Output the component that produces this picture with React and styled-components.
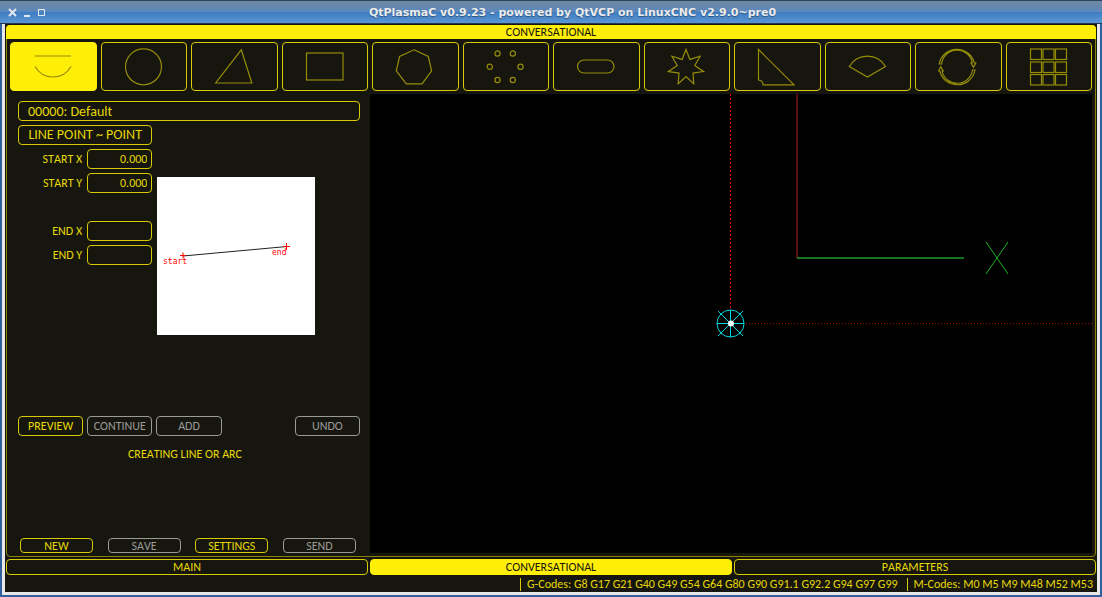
import React from "react";
import styled, { createGlobalStyle, css } from "styled-components";

const YELLOW = "#ffee06";
const TEXT = "#e6d806";
const DIM = "#d8cb06";
const OLIVE = "#8b8208";
const DARK = "#16160e";
const GREY = "#9a9a98";

const GlobalStyle = createGlobalStyle`
  * { box-sizing: border-box; }
  body { margin: 0; font-family: Carlito, Lato, "Liberation Sans", sans-serif; font-size: 12px; font-kerning: none; }
  button, input, select { font: inherit; font-kerning: none; color: inherit; margin: 0; }
`;

const Window = styled.div`
  min-height: 100vh;
  display: flex;
  flex-direction: column;
  background: #e8e8e8;
  border: 2px solid #31619d;
  border-top: 0;
`;

const TitleBar = styled.header`
  flex: none;
  height: 24px;
  margin: 0 -2px;
  padding: 0 4px 0 8px;
  display: flex;
  align-items: center;
  border-top: 1px solid #2c4463;
  border-bottom: 1px solid #23374f;
  background: linear-gradient(#71879f 0%, #5b88bd 48%, #3f7ec2 52%, #5b95d4 100%);
`;

const Title = styled.h1`
  flex: 1;
  margin: 0;
  font: bold 11px/20px "DejaVu Sans", sans-serif;
  padding-top: 2px;
  color: #ececec;
  text-align: center;
  text-shadow: 0 1px 1px #33527a;
`;

const WindowControls = styled.div`
  display: flex;
  gap: 6px;
`;

const WindowButton = styled.button`
  width: 9px;
  height: 10px;
  padding: 0;
  border: 0;
  background: none;
  display: flex;

  svg { stroke: #e4e8ec; fill: none; stroke-width: 2; }
  rect { stroke-width: 1; }
`;

const Body = styled.main`
  flex: 1;
  display: flex;
  flex-direction: column;
  margin: 0 3px 3px;
  padding: 1px;
  background: ${DARK};
  color: ${TEXT};
`;

const Page = styled.section`
  flex: 1;
  display: flex;
  flex-direction: column;
  border: 1px solid ${OLIVE};
  border-radius: 4px;
`;

const PageTitle = styled.h2`
  margin: -1px -1px 0;
  height: 14px;
  border-radius: 4px 4px 0 0;
  background: ${YELLOW};
  color: ${DARK};
  font-size: 12px;
  font-weight: 400;
  line-height: 15px;
  text-align: center;
`;

const Toolbar = styled.nav`
  display: flex;
  gap: 4px;
  padding: 3px 3px 3px;
`;

const ShapeButton = styled.button`
  flex: 1;
  min-width: 0;
  height: 49px;
  padding: 0;
  display: flex;
  align-items: center;
  justify-content: center;
  border: 1px solid ${(p) => (p.$active ? YELLOW : DIM)};
  border-radius: 4px;
  background: ${(p) => (p.$active ? YELLOW : DARK)};

  svg { fill: none; stroke: #958c08; stroke-width: 1.2; }
`;

const Content = styled.div`
  flex: 1;
  display: flex;
  padding: 0 3px 3px;
`;

const Panel = styled.form`
  flex: none;
  width: 360px;
  padding: 7px 10px 0 8px;
  display: flex;
  flex-direction: column;
`;

const Fields = styled.div`
  display: grid;
  grid-template-columns: repeat(5, 1fr);
  grid-auto-rows: 20px;
  gap: 4px;
`;

const outline = css`
  min-width: 0;
  border: 1px solid ${(p) => (p.disabled ? GREY : DIM)};
  border-radius: 4px;
  background: ${DARK};
  color: ${(p) => (p.disabled ? GREY : TEXT)};
`;

const Material = styled.select`
  ${outline}
  grid-column: 1 / -1;
  appearance: none;
  padding: 0 9px;
  font-size: 14px;
`;

const Button = styled.button`
  ${outline}
  padding: 0;
  line-height: 14px;
  font-size: ${(p) => (p.$large ? 14 : 12)}px;
  grid-column: ${(p) => p.$column || "auto"};
`;

const Label = styled.label`
  grid-column: 1;
  grid-row: ${(p) => p.$row};
  padding-right: 1px;
  line-height: 20px;
  text-align: right;
`;

const NumberInput = styled.input`
  ${outline}
  grid-column: 2;
  grid-row: ${(p) => p.$row};
  width: 100%;
  padding: 0 4px;
  text-align: right;
`;

const Diagram = styled.svg`
  grid-column: 3 / 6;
  grid-row: 4 / 11;
  align-self: start;
  width: 158px;
  height: 158px;
  margin: 4px 0 0 1px;
  background: #fff;
`;

const Actions = styled(Fields)`
  margin-top: 79px;
`;

const Status = styled.p`
  flex: 1;
  margin: 10px 0 0;
  padding-right: 8px;
  line-height: 16px;
  text-align: center;
`;

const FileActions = styled.div`
  display: flex;
  justify-content: space-between;
  padding: 0 4px 0 2px;
`;

const FileButton = styled(Button)`
  width: 73px;
  height: 15px;
`;

const Plot = styled.div`
  flex: 1;
  min-width: 0;
  display: flex;
  background: #000;

  svg { flex: 1; width: 0; height: auto; min-height: 100%; }
`;

const Tabs = styled.nav`
  display: flex;
  gap: 2px;
  margin-top: 2px;
`;

const Tab = styled.button`
  flex: 1;
  height: 16px;
  padding: 0;
  border: 1px solid ${(p) => (p.$active ? YELLOW : DIM)};
  border-radius: 4px;
  background: ${(p) => (p.$active ? YELLOW : DARK)};
  color: ${(p) => (p.$active ? DARK : TEXT)};
  line-height: 14px;
`;

const Codes = styled.footer`
  display: flex;
  justify-content: flex-end;
  gap: 9px;
  padding: 3px 3px 0 0;
  line-height: 13px;
`;

const Code = styled.span`
  border-left: 1px solid ${DIM};
  padding-left: 6px;
`;

const starPoints = Array.from({ length: 14 }, (_, i) => {
  const r = i % 2 ? 9 : 18;
  const a = (i * Math.PI) / 7;
  return `${19 + r * Math.sin(a)},${21 - r * Math.cos(a)}`;
}).join(" ");

const shapes = [
  ["Line or arc", <path d="M1.5 9.5H38M2 20A20.7 20.7 0 0 0 38 20" />],
  ["Circle", <circle cx="19.5" cy="20.3" r="18" />],
  ["Triangle", <path d="M27.3 3.3L37.8 36.5H1.7Z" />],
  ["Rectangle", <rect x="1.5" y="6.5" width="36.5" height="27" />],
  ["Polygon", <path d="M19 3.3L33.3 10L36.6 24.4L27 37.4H11.3L1.3 24.4L4.6 10Z" />],
  ["Bolt circle", [[11.5, 7], [26.8, 7], [3.8, 20.3], [34.5, 20.3], [11.5, 33.5], [26.8, 33.5]].map(([x, y]) => (
    <circle key={`${x}-${y}`} cx={x} cy={y} r="2.6" />
  ))],
  ["Slot", <rect x="1.5" y="13.5" width="36.5" height="13" rx="6.5" />],
  ["Star", <polygon points={starPoints} />],
  ["Gusset", <path d="M1.5 3L37 38.3H6A5 5 0 0 0 1.5 33.5Z" />],
  ["Sector", <path d="M1.3 20A21 21 0 0 1 37.5 20L19.4 30.5Z" />],
  ["Rotate", <path d="M1.2 17.5A18 18 0 0 1 36.4 16.5H37.8L35.5 20.8L33 16.5H34.3A15.5 15.5 0 0 0 3.6 17.5ZM37 23.5A18 18 0 0 1 1.8 24.5H.5L2.8 20.2L5.2 24.5H4A15.5 15.5 0 0 0 34.5 23.5Z" />],
  ["Array", [2.5, 15.5, 28].map((y) => [1.5, 14, 26.5].map((x) => (
    <rect key={`${x}-${y}`} x={x} y={y} width="11" height="10.5" />
  )))],
];

const fields = [
  ["START X", "0.000", 3],
  ["START Y", "0.000", 4],
  ["END X", "", 6],
  ["END Y", "", 7],
];

export default function App() {
  return (
    <>
      <GlobalStyle />
      <Window>
        <TitleBar>
          <WindowControls>
            <WindowButton aria-label="Close">
              <svg width="9" height="10"><path d="M1 2L8 9M8 2L1 9" /></svg>
            </WindowButton>
            <WindowButton aria-label="Minimize">
              <svg width="9" height="10"><path d="M1 9H7" /></svg>
            </WindowButton>
            <WindowButton aria-label="Maximize">
              <svg width="9" height="10"><rect x="0.5" y="2.5" width="6" height="6" /></svg>
            </WindowButton>
          </WindowControls>
          <Title>QtPlasmaC v0.9.23 - powered by QtVCP on LinuxCNC v2.9.0~pre0</Title>
        </TitleBar>
        <Body>
          <Page>
            <PageTitle>CONVERSATIONAL</PageTitle>
            <Toolbar>
              {shapes.map(([name, drawing], i) => (
                <ShapeButton key={name} aria-label={name} $active={i === 0}>
                  <svg width="40" height="40" viewBox="0 0.5 40 40">{drawing}</svg>
                </ShapeButton>
              ))}
            </Toolbar>
            <Content>
              <Panel onSubmit={(e) => e.preventDefault()}>
                <Fields>
                  <Material aria-label="Material"><option>00000: Default</option></Material>
                  <Button type="button" $large $column="1 / 3">LINE POINT ~ POINT</Button>
                  {fields.map(([name, value, row]) => (
                    <React.Fragment key={name}>
                      <Label htmlFor={name} $row={row}>{name}</Label>
                      <NumberInput id={name} defaultValue={value} $row={row} />
                    </React.Fragment>
                  ))}
                  <Diagram viewBox="0 0 158 158" role="img" aria-label="Line from start to end">
                    <path d="M26 79L130 69.5" stroke="#222" fill="none" />
                    <path d="M23 78.5H29M26 75.5V81.5M126 69.5H133M129.5 66V73" stroke="#f00" fill="none" />
                    <g fill="#f00" fontFamily="DejaVu Sans Mono, monospace" fontSize="8">
                      <text x="6" y="87">start</text>
                      <text x="115" y="78">end</text>
                    </g>
                  </Diagram>
                </Fields>
                <Actions>
                  <Button type="button">PREVIEW</Button>
                  <Button type="button" disabled>CONTINUE</Button>
                  <Button type="button" disabled>ADD</Button>
                  <Button type="button" disabled $column="5">UNDO</Button>
                </Actions>
                <Status>CREATING LINE OR ARC</Status>
                <FileActions>
                  <FileButton type="button">NEW</FileButton>
                  <FileButton type="button" disabled>SAVE</FileButton>
                  <FileButton type="button">SETTINGS</FileButton>
                  <FileButton type="button" disabled>SEND</FileButton>
                </FileActions>
              </Panel>
              <Plot>
                <svg viewBox="0 0 722 459" preserveAspectRatio="xMinYMin slice" fill="none" role="img" aria-label="Tool path preview">
                  <path d="M360.5 0V229" stroke="#f00000" strokeDasharray="2 2" />
                  <path d="M361 229.5H722" stroke="#a00000" strokeDasharray="1 2" />
                  <path d="M427 0V164" stroke="#b02028" />
                  <path d="M427 164H594" stroke="#1f9a24" strokeWidth="1.4" />
                  <path d="M616 148L638 180M638 148L616 180" stroke="#20b428" />
                  <g stroke="#00d8e0">
                    <circle cx="360.5" cy="229.5" r="13.5" />
                    <path d="M347 229.5H374M360.5 216V243M348 217L373 242M373 217L348 242" />
                  </g>
                  <circle cx="361" cy="229.5" r="3" fill="#fff" />
                </svg>
              </Plot>
            </Content>
          </Page>
          <Tabs>
            <Tab>MAIN</Tab>
            <Tab $active>CONVERSATIONAL</Tab>
            <Tab>PARAMETERS</Tab>
          </Tabs>
          <Codes>
            <Code>G-Codes: G8 G17 G21 G40 G49 G54 G64 G80 G90 G91.1 G92.2 G94 G97 G99</Code>
            <Code>M-Codes: M0 M5 M9 M48 M52 M53</Code>
          </Codes>
        </Body>
      </Window>
    </>
  );
}
